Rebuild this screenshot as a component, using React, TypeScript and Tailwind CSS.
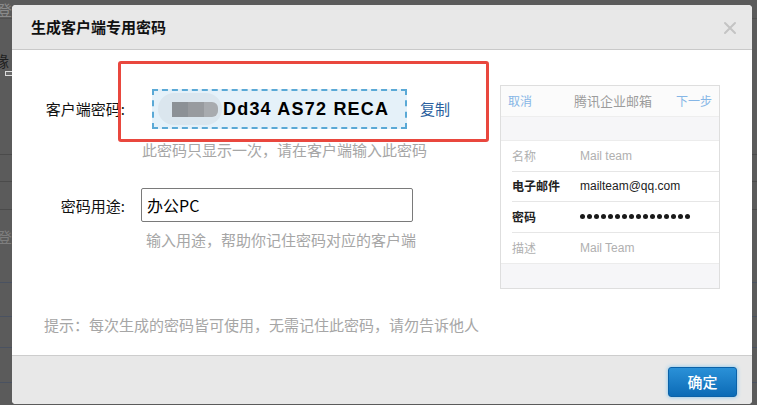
import React from "react";

const cjk = { fontFamily: '"Noto Sans CJK SC", "Microsoft YaHei", sans-serif' };
const arial = { fontFamily: '"Liberation Sans", Arial, "Noto Sans CJK SC", sans-serif' };

function PhonePanel() {
  const rows = [
    { k: "名称", v: "Mail team", dim: true },
    { k: "电子邮件", v: "mailteam@qq.com", dim: false },
    { k: "密码", v: "dots", dim: false },
    { k: "描述", v: "Mail Team", dim: true },
  ];
  return (
    <div className="mt-[35px] w-[220px] h-[204px] border border-[#dedede] bg-[#f6f6f8] flex flex-col" style={cjk}>
      <div className="h-[31px] bg-[#fbfbfb] border-b border-[#eeeeee] flex items-center justify-between px-[7px] text-[12px]">
        <span className="text-[#86b6e6]">取消</span>
        <span className="text-[#9c9c9c] text-[13px] ml-[18px]">腾讯企业邮箱</span>
        <span className="text-[#86b6e6]">下一步</span>
      </div>
      <div className="h-[23px]" />
      <div className="bg-white border-y border-[#ececec]">
        {rows.map((r, i) => (
          <div key={i} className="h-[30.5px] flex items-center pl-[11px]">
            <div className={"h-full flex-1 flex items-center " + (i < 3 ? "border-b border-[#e6e6e6]" : "")}>
              <span className={"w-[68px] text-[12px] " + (r.dim ? "text-[#b0b0b0]" : "text-[#222] font-semibold")}>{r.k}</span>
              {r.v === "dots" ? (
                <span className="flex gap-[2px]">
                  {Array.from({ length: 16 }).map((_, j) => (
                    <span key={j} className="w-[5px] h-[5px] rounded-full bg-[#1a1a1a]" />
                  ))}
                </span>
              ) : (
                <span className={"text-[12px] " + (r.dim ? "text-[#b0b0b0]" : "text-[#222]")} style={arial}>{r.v}</span>
              )}
            </div>
          </div>
        ))}
      </div>
      <div className="flex-1" />
    </div>
  );
}

export default function App() {
  return (
    <div className="relative w-[757px] h-[405px] overflow-hidden bg-[#5b5b5b]" style={cjk}>
      {/* dimmed page behind the dialog */}
      <div className="flex flex-col text-[15px]">
        <div className="h-[19px] border-b border-[#505050] text-[#8a8a8a] leading-[19px] -ml-[3px]">登</div>
        <div className="h-[34px]" />
        <div className="h-[16px] text-[#1e1e1e] leading-[16px] -ml-[6px]">缘</div>
        <div className="h-[8px] pl-[5px] pt-[2px]"><div className="w-[9px] h-[5px] border border-[#dcdcdc] bg-[#6a6a6a]" /></div>
        <div className="h-[78px] border-b border-[#4b4b4b]" />
        <div className="h-[27px] border-b border-[#4b4b4b]" />
        <div className="h-[28px] border-b border-[#4b4b4b]" />
        <div className="h-[18px]" />
        <div className="h-[18px] text-[#7e7e7e] leading-[18px] -ml-[3px]">登</div>
        <div className="h-[37px] border-b border-[#4a5261]" />
        <div className="h-[34px] border-b border-[#4a5261]" />
        <div className="h-[31px] border-b border-[#4a5261]" />
        <div className="h-[35px] border-b border-[#4a5261]" />
      </div>

      {/* dialog */}
      <div className="absolute left-[12px] top-[5px] w-[740px] h-[399px] rounded-[4px] overflow-hidden bg-white flex flex-col">
        <div className="h-[45px] shrink-0 bg-[#e8e8e8] border-b border-[#c9c9c9] flex items-center justify-between pl-[19px] pr-[15px]">
          <span className="text-[15px] font-bold text-[#111]">生成客户端专用密码</span>
          <svg width="14" height="14" viewBox="0 0 14 14" className="mt-[1px]">
            <path d="M2 2 L12 12 M12 2 L2 12" stroke="#c4c4c4" strokeWidth="2" strokeLinecap="round" />
          </svg>
        </div>

        <div className="relative h-[305px] shrink-0">
          <div className="flex">
            <div className="w-[488px]">
              <div className="mt-[39px] h-[40px] flex items-center">
                <span className="w-[113px] text-right text-[15px] text-[#111]">客户端密码:</span>
                <div className="ml-[27px] w-[255px] h-[40px] border-2 border-dashed border-[#5aa9d6] bg-[#e5f1f9] flex items-center pl-[4px]">
                  <div className="w-[64px] h-[32px] rounded-[16px] bg-[#dbe6ee] flex items-center pl-[14px]">
                    <div className="w-[16px] h-[15px] bg-[#8c9196]" />
                    <div className="w-[16px] h-[15px] bg-[#989b9f]" />
                    <div className="w-[14px] h-[15px] bg-[#a8abaf] rounded-r-[6px]" />
                  </div>
                  <span className="ml-[1px] text-[18px] font-bold text-black tracking-[1.2px]" style={arial}>Dd34 AS72 RECA</span>
                </div>
                <span className="ml-[13px] text-[15px] text-[#2b5f9e]">复制</span>
              </div>
              <div className="mt-[11px] pl-[130px] text-[15px] leading-[20px] text-[#a6a6a6]">此密码只显示一次，请在客户端输入此密码</div>

              <div className="mt-[28px] h-[34px] flex items-center">
                <span className="w-[113px] text-right text-[15px] text-[#111] mt-[2px]">密码用途:</span>
                <div className="ml-[16px] w-[272px] h-[34px] border border-[#7a7a7a] rounded-[2px] flex items-center pl-[5px] text-[16px] text-black">办公PC</div>
              </div>
              <div className="mt-[8px] pl-[134px] text-[15px] leading-[20px] text-[#a6a6a6]">输入用途，帮助你记住密码对应的客户端</div>
            </div>
            <PhonePanel />
          </div>
          <div className="mt-[26px] pl-[32px] text-[15px] leading-[20px] text-[#a6a6a6]">提示：每次生成的密码皆可使用，无需记住此密码，请勿告诉他人</div>

          <div className="absolute left-[106px] top-[11px] w-[371px] h-[81px] border-[3px] border-[#e9473e] rounded-[3px]" />
        </div>

        <div className="flex-1 bg-[#e8e8e8] border-t border-[#cdcdcd] flex justify-end items-start pt-[11px] pr-[15px]">
          <button className="w-[69px] h-[30px] rounded-[3px] border border-[#0b62a8] bg-gradient-to-b from-[#2a91d8] to-[#0a6bb6] text-white text-[15px] font-medium shadow-[0_0_4px_#7cc4f0]">确定</button>
        </div>
      </div>
    </div>
  );
}
